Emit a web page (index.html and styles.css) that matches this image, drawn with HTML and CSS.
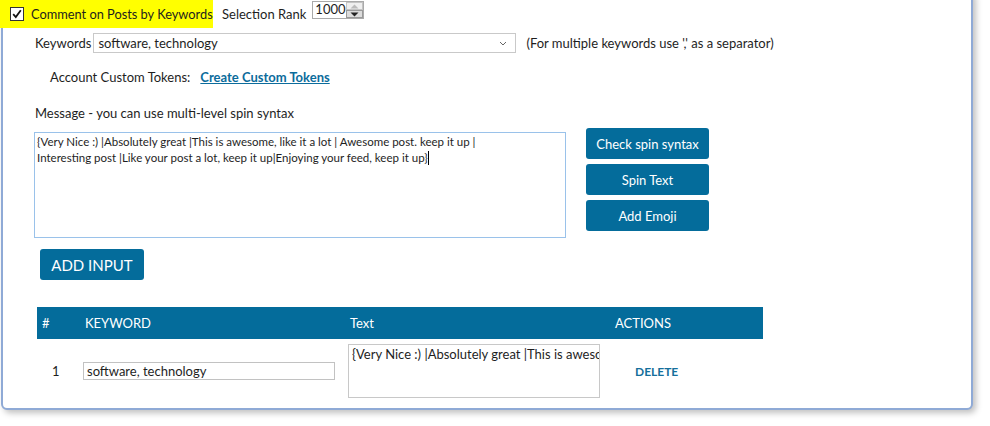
FILE: index.html
```html
<!DOCTYPE html>
<html>
<head>
<meta charset="utf-8">
<link rel="stylesheet" href="styles.css">
</head>
<body>
<div class="frame">
  <div class="top-row">
    <div class="highlight">
      <span class="checkbox">
        <svg width="12" height="12" viewBox="0 0 12 12"><path d="M2.2 6.2 L4.8 9 L9.8 2.2" fill="none" stroke="#111" stroke-width="1.8"/></svg>
      </span>
      <span class="hl-text">Comment on Posts by Keywords</span>
    </div>
    <span class="rank-label">Selection Rank</span>
    <div class="spinner">
      <span class="spin-val">1000</span>
      <div class="spin-btns">
        <span class="spin-btn up"><svg width="9" height="5" viewBox="0 0 9 5"><path d="M0.5 4.5 L4.5 0.5 L8.5 4.5Z" fill="#bbb"/></svg></span>
        <span class="spin-btn down"><svg width="9" height="5" viewBox="0 0 9 5"><path d="M0.5 0.5 L4.5 4.5 L8.5 0.5Z" fill="#222"/></svg></span>
      </div>
    </div>
  </div>

  <div class="kw-row">
    <span class="kw-label">Keywords</span>
    <div class="combo">
      <span>software, technology</span>
      <svg class="chev" width="8" height="5" viewBox="0 0 8 5"><path d="M1 1 L4 4 L7 1" fill="none" stroke="#666" stroke-width="1"/></svg>
    </div>
    <span class="hint">(For multiple keywords use ',' as a separator)</span>
  </div>

  <div class="tokens-row">
    <span>Account Custom Tokens:</span>
    <a class="link" href="#">Create Custom Tokens</a>
  </div>

  <div class="msg-label">Message - you can use multi-level spin syntax</div>

  <div class="msg-row">
    <div class="msg-box">{Very Nice :) |Absolutely great |This is awesome, like it a lot | Awesome post. keep it up |<br>Interesting post |Like your post a lot, keep it up|Enjoying your feed, keep it up}<span class="caret"></span></div>
    <div class="side-btns">
      <button class="btn">Check spin syntax</button>
      <button class="btn">Spin Text</button>
      <button class="btn">Add Emoji</button>
    </div>
  </div>

  <button class="btn add-btn">ADD INPUT</button>

  <div class="table">
    <div class="thead">
      <div class="th">#</div>
      <div class="th">KEYWORD</div>
      <div class="th">Text</div>
      <div class="th">ACTIONS</div>
    </div>
    <div class="trow">
      <div class="td num">1</div>
      <div class="td"><div class="cell-input">software, technology</div></div>
      <div class="td"><div class="cell-text">{Very Nice :) |Absolutely great |This is awesome, like it a lot | Awesome post. keep it up |</div></div>
      <div class="td"><a class="delete" href="#">DELETE</a></div>
    </div>
  </div>
</div>
</body>
</html>
```

FILE: styles.css
```css
* { box-sizing: border-box; }
html, body { margin: 0; padding: 0; background: #fff; }
body {
  font-family: Lato, "Open Sans", sans-serif;
  font-size: 13px;
  color: #1e1e1e;
  overflow: hidden;
  height: 426px;
}
.frame {
  margin: -10px 17px 0 1px;
  height: 420px;
  border: 2px solid #8faad6;
  border-radius: 6px;
  box-shadow: 3px 3px 6px rgba(0,0,0,0.25);
  padding: 8px 0 0 0;
  background: #fff;
}
.top-row {
  display: flex;
  align-items: flex-start;
  height: 28px;
}
.highlight {
  flex-shrink: 0;
  margin-left: -3px;
  width: 213px;
  height: 28px;
  background: #ffff00;
  display: flex;
  align-items: center;
  padding-left: 10px;
  white-space: nowrap;
}
.checkbox {
  flex-shrink: 0;
  width: 14px;
  height: 14px;
  border: 1px solid #333;
  background: #fff;
  display: flex;
  align-items: center;
  justify-content: center;
}
.hl-text {
  margin-left: 7px;
  font-size: 12.8px;
  color: #1e1e1e;
}
.rank-label {
  margin-left: 9px;
  font-size: 13px;
  line-height: 28px;
  white-space: nowrap;
}
.spinner {
  margin-left: 6px;
  margin-top: 1px;
  width: 52px;
  height: 18px;
  border: 1px solid #aaa;
  display: flex;
  background: #fff;
}
.spin-val {
  flex: 1;
  font-size: 13px;
  line-height: 14px;
  padding-left: 2px;
}
.spin-btns {
  width: 17px;
  display: flex;
  flex-direction: column;
}
.spin-btn {
  flex: 1;
  border: 1px solid #c4c4c4;
  background: #efefef;
  display: flex;
  align-items: center;
  justify-content: center;
}
.spin-btn.down { background: #dcdcdc; border-color: #999; }

.kw-row {
  display: flex;
  align-items: center;
  margin-top: 5px;
  padding-left: 32px;
  height: 20px;
}
.kw-label { font-size: 13px; }
.combo {
  margin-left: 2px;
  width: 423px;
  height: 20px;
  border: 1px solid #c9c9c9;
  display: flex;
  align-items: center;
  justify-content: space-between;
  padding: 0 8px 0 4px;
}
.hint { margin-left: 10px; }

.tokens-row {
  margin-top: 16px;
  padding-left: 47px;
  height: 16px;
  display: flex;
  align-items: center;
}
.link {
  margin-left: 10px;
  color: #0c6c9c;
  font-weight: bold;
  text-decoration: underline;
}
.msg-label {
  margin-top: 20px;
  padding-left: 32px;
  height: 16px;
  line-height: 16px;
}
.msg-row {
  display: flex;
  align-items: flex-start;
  margin-top: 7px;
  padding-left: 31px;
}
.msg-box {
  margin-top: 4px;
  width: 532px;
  height: 106px;
  border: 1px solid #9ac2ea;
  padding: 1px 2px;
  line-height: 16px;
  font-size: 11.5px;
}
.caret {
  display: inline-block;
  width: 1.5px;
  height: 14px;
  background: #000;
  vertical-align: -3px;
}
.side-btns {
  margin-left: 20px;
  display: flex;
  flex-direction: column;
  gap: 5px;
}
.btn {
  font-family: inherit;
  background: #046c9b;
  color: #fff;
  border: none;
  border-radius: 3px;
  width: 123px;
  height: 31px;
  font-size: 13px;
  padding: 0;
}
.add-btn {
  display: block;
  margin: 11px 0 0 37px;
  width: 104px;
  height: 31px;
  font-size: 15px;
}
.table {
  margin: 27px 0 0 34px;
  width: 726px;
}
.thead, .trow {
  display: grid;
  grid-template-columns: 43px 265px 265px 153px;
}
.thead {
  background: #046c9b;
  height: 32px;
  color: #fff;
  font-size: 13px;
  align-items: center;
}
.th { padding-left: 5px; }
.trow {
  height: 63px;
  align-items: center;
}
.td { padding-left: 3px; }
.td.num { padding-left: 15px; }
.cell-input {
  width: 252px;
  height: 18px;
  border: 1px solid #c2c2c2;
  padding-left: 3px;
  line-height: 16px;
}
.cell-text {
  width: 252px;
  height: 54px;
  border: 1px solid #c8c8c8;
  padding: 1px 3px;
  white-space: nowrap;
  overflow: hidden;
  line-height: 16px;
}
.delete {
  margin-left: 22px;
  color: #156f9c;
  font-weight: bold;
  text-decoration: none;
  font-size: 12px;
}
```
